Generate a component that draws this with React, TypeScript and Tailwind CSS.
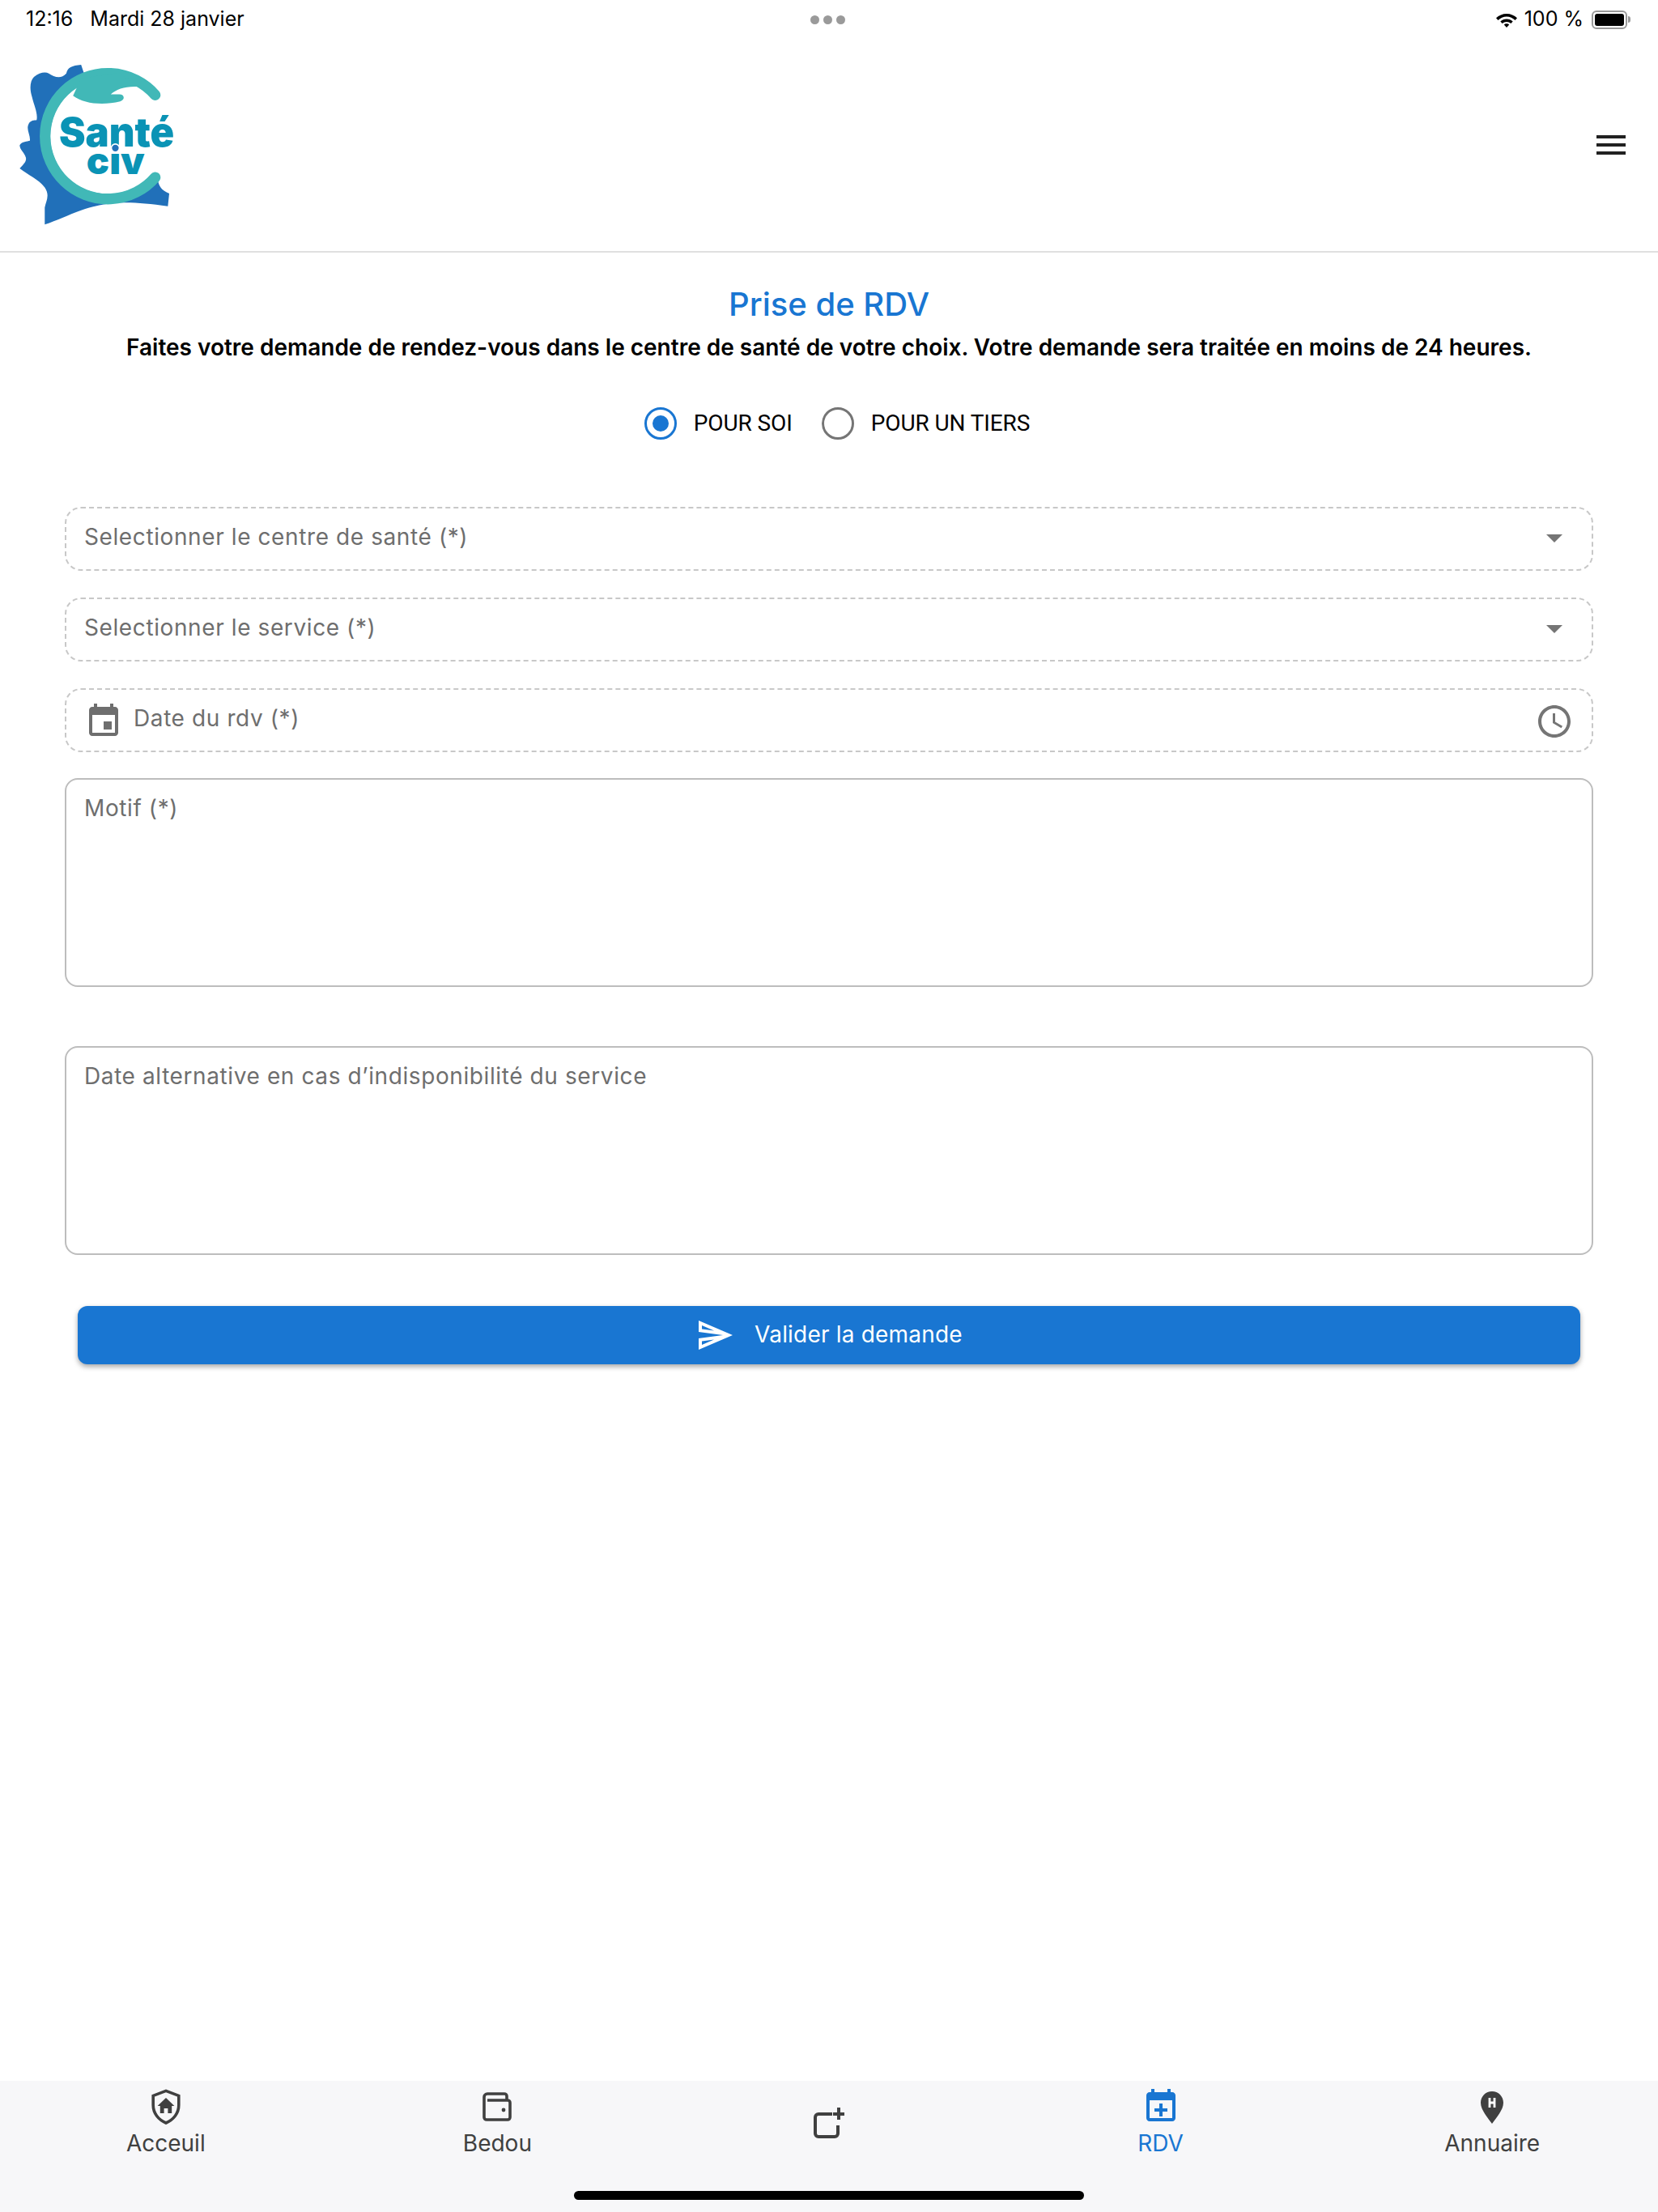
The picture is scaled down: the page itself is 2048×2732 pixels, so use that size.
import React from 'react';

const font = { fontFamily: 'Inter, "Liberation Sans", sans-serif' };

const Logo = () => (
    <svg viewBox="72 240 575 595" className="w-[192px] h-[198px] overflow-visible">
        <path
            d="M165 833 L165 770 C170 745 185 725 165 695 C140 665 105 650 72 625 C85 610 98 600 95 585 C90 565 72 555 72 538 C80 525 100 525 110 522 C112 500 95 480 105 460 C112 445 125 447 135 445 C140 420 125 390 118 360 C108 330 110 300 125 285 C145 270 165 265 180 272 C200 285 225 295 245 272 C250 250 265 243 300 240 L310 270 L585 670 C590 690 595 705 627 718 L622 765 C480 745 400 745 300 780 C250 798 210 818 165 833 Z"
            fill="#2170b9"
        />
        <circle cx="400" cy="505" r="215" fill="#ffffff" />
        <path d="M575 352 A 233 233 0 1 0 575 658" fill="none" stroke="#41b8b7" strokeWidth="40" strokeLinecap="round" />
        <path
            d="M270 355 C310 385 380 392 445 376 C464 371 462 350 442 350 L410 350 C430 330 470 318 515 322 L440 270 L300 290 Z"
            fill="#41b8b7"
        />
        <text x="218" y="545" textLength="428" lengthAdjust="spacingAndGlyphs" fontSize="150" fontWeight="900" fill="#0a93b5" fontFamily="Inter, sans-serif">Santé</text>
        <text x="320" y="645" textLength="216" lengthAdjust="spacingAndGlyphs" fontSize="140" fontWeight="900" fill="#0a93b5" fontFamily="Inter, sans-serif">cıv</text>
        <circle cx="427" cy="549" r="15" fill="#2170b9" stroke="#ffffff" strokeWidth="5" />
    </svg>
);

const Caret = () => (
    <svg viewBox="0 0 20 10" className="w-[20px] h-[10px] mt-[4px]">
        <path d="M0 0h20L10 10z" fill="#757575" />
    </svg>
);

const NavIcon: React.FC<{ children: React.ReactNode; color?: string }> = ({ children, color = '#404040' }) => (
    <svg viewBox="0 0 24 24" className="w-[48px] h-[48px]" style={{ color }}>
        {children}
    </svg>
);

const Field: React.FC<{ children: React.ReactNode }> = ({ children }) => (
    <div className="h-[79px] flex items-start justify-between pl-[22px] pr-[36px] pt-[17px] border-2 border-dashed border-[#c8c8c8] rounded-[20px] text-[28px] leading-[36px] tracking-[0.6px] text-[#6e6e6e]">
        {children}
    </div>
);

const TextBox: React.FC<{ label: string }> = ({ label }) => (
    <div className="h-[258px] pl-[22px] pt-[17px] border-2 border-[#bdbdbd] rounded-[16px] text-[28px] leading-[36px] tracking-[0.6px] text-[#6e6e6e]">
        {label}
    </div>
);

const tabs = [
    {
        label: 'Acceuil',
        icon: (
            <NavIcon>
                <path d="M12 2.200 19.900 5.200V11c0 5-3.200 9-7.900 11-4.700-2-7.900-6-7.900-11V5.200z" fill="none" stroke="currentColor" strokeWidth="1.800" />
                <path d="M12 6.500 17.200 11.500H15.600V16H13.200V13H10.800V16H8.400V11.500H6.800z" fill="currentColor" />
            </NavIcon>
        ),
    },
    {
        label: 'Bedou',
        icon: (
            <NavIcon>
                <path d="M6 8h12.500a1.500 1.500 0 0 1 1.500 1.500v9a1.500 1.500 0 0 1-1.500 1.500h-13A1.500 1.500 0 0 1 4 18.500V6a2 2 0 0 1 2-2h10.500A1.500 1.500 0 0 1 18 5.500V8" fill="none" stroke="currentColor" strokeWidth="1.800" />
                <circle cx="16" cy="14" r="1.200" fill="currentColor" />
            </NavIcon>
        ),
    },
    {
        label: '',
        icon: (
            <NavIcon>
                <path d="M14 6.500H5.500A2 2 0 0 0 3.500 8.500V18.500A2 2 0 0 0 5.500 20.500H15.500A2 2 0 0 0 17.500 18.500V13.500" fill="none" stroke="currentColor" strokeWidth="2" />
                <path d="M18 2.500V10M14.500 6.500H21.500" fill="none" stroke="currentColor" strokeWidth="2" />
            </NavIcon>
        ),
    },
    {
        label: 'RDV',
        active: true,
        icon: (
            <NavIcon color="#1976d2">
                <path d="M19 3h-1V1h-2v2H8V1H6v2H5c-1.100 0-2 .9-2 2v14c0 1.100.9 2 2 2h14c1.100 0 2-.9 2-2V5c0-1.100-.9-2-2-2zm0 16H5V8h14v11z" fill="currentColor" />
                <path d="M11 10h2v3h3v2h-3v3h-2v-3H8v-2h3z" fill="currentColor" />
            </NavIcon>
        ),
    },
    {
        label: 'Annuaire',
        icon: (
            <NavIcon>
                <path d="M12 2.500C15.900 2.500 19 5.600 19 9.500 19 14 14.500 19 12 22.500 9.500 19 5 14 5 9.500 5 5.600 8.100 2.500 12 2.500z" fill="currentColor" />
                <path d="M9.800 6.500h1.400v2.300h1.600V6.500h1.400v6h-1.400v-2.300h-1.600v2.300H9.800z" fill="#ffffff" />
            </NavIcon>
        ),
    },
];

export default function App() {
    return (
        <div className="relative w-[2048px] h-[2732px] flex flex-col bg-white overflow-hidden" style={font}>
            {/* status bar */}
            <div className="h-[46px] shrink-0 grid grid-cols-3 items-center pl-[32px] pr-[34px] pt-[2px] text-[25px] text-black">
                <div className="flex gap-[21px]">
                    <span>12:16</span>
                    <span>Mardi 28 janvier</span>
                </div>
                <div className="flex justify-center gap-[5px]">
                    <span className="w-[11px] h-[11px] rounded-full bg-[#9a9a9a]" />
                    <span className="w-[11px] h-[11px] rounded-full bg-[#9a9a9a]" />
                    <span className="w-[11px] h-[11px] rounded-full bg-[#9a9a9a]" />
                </div>
                <div className="flex justify-end items-center">
                    <svg viewBox="0 0 28 20" className="w-[28px] h-[20px]">
                        <path d="M14 3C19 3 23.500 5 27 8.300L24.500 11C21.800 8.300 18 6.500 14 6.500S6.200 8.300 3.500 11L1 8.300C4.500 5 9 3 14 3z" fill="#000" />
                        <path d="M14 9.500C17 9.500 19.700 10.700 21.700 12.600L19.300 15.100C17.900 13.800 16 13 14 13S10.100 13.800 8.700 15.100L6.300 12.600C8.300 10.700 11 9.500 14 9.500z" fill="#000" />
                        <path d="M14 15.200C15.300 15.200 16.400 15.700 17.200 16.500L14 20 10.800 16.500C11.600 15.700 12.700 15.200 14 15.200z" fill="#000" />
                    </svg>
                    <span className="ml-[8px]">100 %</span>
                    <div className="ml-[10px] w-[44px] h-[23px] rounded-[6px] border-2 border-[#999999] p-[2px]">
                        <div className="w-full h-full rounded-[3px] bg-black" />
                    </div>
                    <span className="w-[3px] h-[8px] ml-[1px] rounded-r-full bg-[#999999]" />
                </div>
            </div>

            {/* header */}
            <div className="h-[266px] shrink-0 flex items-center justify-between pl-[24px] pr-[40px] pt-[2px] border-b-2 border-[#e0e0e0]">
                <Logo />
                <svg viewBox="0 0 36 24" className="w-[36px] h-[24px]">
                    <path d="M0 0h36v4H0zM0 10h36v4H0zM0 20h36v4H0z" fill="#212121" />
                </svg>
            </div>

            {/* form */}
            <div className="flex-1 flex flex-col">
                <h1 className="mt-[40px] text-center text-[40px] leading-[48px] font-medium text-[#1976d2]">Prise de RDV</h1>
                <p className="mt-[11px] text-center text-[28px] leading-[36px] font-semibold text-black">
                    Faites votre demande de rendez-vous dans le centre de santé de votre choix. Votre demande sera traitée en moins de 24 heures.
                </p>

                <div className="mt-[56px] pl-[20px] flex justify-center items-center h-[40px] text-[28px] tracking-[-0.1px] text-black" style={{ fontFamily: 'Roboto, sans-serif' }}>
                    <span className="w-[40px] h-[40px] rounded-full border-[3px] border-[#1976d2] flex items-center justify-center">
                        <span className="w-[20px] h-[20px] rounded-full bg-[#1976d2]" />
                    </span>
                    <span className="ml-[21px]">POUR SOI</span>
                    <span className="ml-[36px] w-[40px] h-[40px] rounded-full border-[3px] border-[#757575]" />
                    <span className="ml-[21px]">POUR UN TIERS</span>
                </div>

                <div className="mt-[83px] mx-[80px] flex flex-col">
                    <div className="flex flex-col gap-[33px]">
                        <Field>
                            <span>Selectionner le centre de santé (*)</span>
                            <span className="h-[36px] flex items-center"><Caret /></span>
                        </Field>
                        <Field>
                            <span>Selectionner le service (*)</span>
                            <span className="h-[36px] flex items-center"><Caret /></span>
                        </Field>
                        <Field>
                            <span className="flex items-start">
                                <svg viewBox="0 0 24 24" className="w-[48px] h-[48px] -mt-[2px] shrink-0">
                                    <path d="M17 12h-5v5h5v-5zM16 1v2H8V1H6v2H5c-1.110 0-1.990.9-1.990 2L3 19c0 1.100.89 2 2 2h14c1.100 0 2-.9 2-2V5c0-1.100-.9-2-2-2h-1V1h-2zm3 18H5V8h14v11z" fill="#6e6e6e" />
                                </svg>
                                <span className="ml-[13px]">Date du rdv (*)</span>
                            </span>
                            <svg viewBox="0 0 24 24" className="w-[48px] h-[48px] -mr-[14px] -mt-[2px] shrink-0">
                                <path d="M11.990 2C6.470 2 2 6.480 2 12s4.470 10 9.990 10C17.520 22 22 17.520 22 12S17.520 2 11.990 2zM12 20c-4.420 0-8-3.580-8-8s3.580-8 8-8 8 3.580 8 8-3.580 8-8 8zm.5-13H11v6l5.250 3.150.75-1.230-4.500-2.670z" fill="#757575" />
                            </svg>
                        </Field>
                    </div>
                    <div className="mt-[32px]">
                        <TextBox label="Motif (*)" />
                    </div>
                    <div className="mt-[73px]">
                        <TextBox label="Date alternative en cas d’indisponibilité du service" />
                    </div>
                </div>

                <button className="mt-[63px] mx-[96px] h-[72px] flex items-center justify-center gap-[25px] rounded-[12px] bg-[#1976d2] text-[28px] tracking-[0.2px] text-white shadow-[0_3px_6px_rgba(0,0,0,0.35)]">
                    <svg viewBox="0 0 24 24" className="w-[48px] h-[48px]">
                        <path d="M4.010 6.030l7.510 3.220-7.520-1 .01-2.220m7.500 8.720L4 17.970v-2.220l7.510-1M2.010 3L2 10l15 2-15 2 .01 7L23 12 2.010 3z" fill="#ffffff" />
                    </svg>
                    <span className="-mt-[3px]">Valider la demande</span>
                </button>
            </div>

            {/* bottom tabs */}
            <div className="h-[162px] shrink-0 bg-[#f7f7f9]">
                <div className="h-[98px] grid grid-cols-5">
                    {tabs.map((tab, i) => (
                        <div key={i} className={`flex flex-col items-center ${tab.label ? 'pt-[8px]' : 'pt-[6px] justify-center'} ${tab.active ? 'text-[#1976d2]' : 'text-[#404040]'}`}>
                            {tab.icon}
                            {tab.label && <span className="mt-[4px] text-[28px] leading-[34px]">{tab.label}</span>}
                        </div>
                    ))}
                </div>
            </div>
            <div className="absolute left-[709px] top-[2706px] w-[630px] h-[11px] rounded-full bg-black" />
        </div>
    );
}
